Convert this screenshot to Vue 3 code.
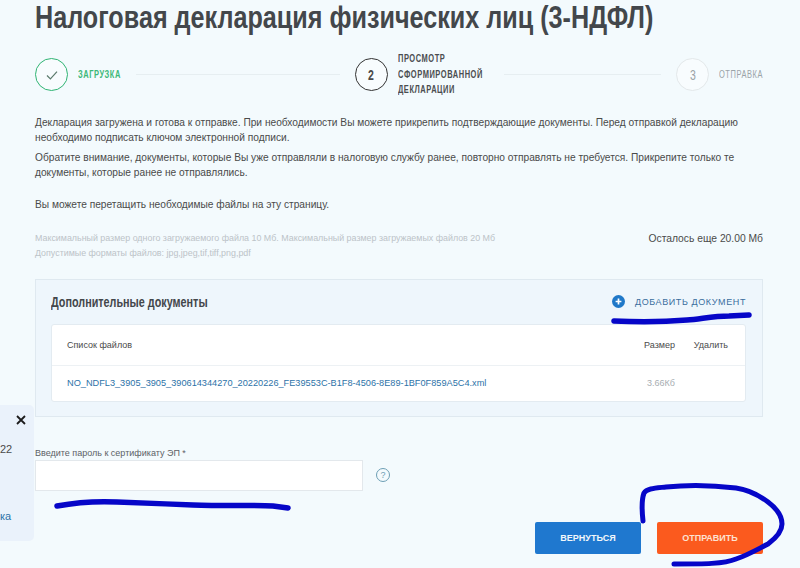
<template>
  <div class="page">
    <h1 class="title"><span class="narrow">Налоговая декларация физических лиц (3-НДФЛ)</span></h1>

    <div class="steps">
      <div class="step done">
        <span class="circle">
          <svg width="14" height="14" viewBox="0 0 14 14" fill="none"><path d="M2 7.5l3.4 3.4L12 3.6" stroke="#5b7a6c" stroke-width="1.2" /></svg>
        </span>
        <span class="step-label short"><span class="narrow">Загрузка</span></span>
      </div>
      <div class="step-line line-1"></div>
      <div class="step active">
        <span class="circle"><span class="narrow-num">2</span></span>
        <span class="step-label long"><span class="narrow">Просмотр<br />сформированной<br />декларации</span></span>
      </div>
      <div class="step-line line-2"></div>
      <div class="step todo">
        <span class="circle"><span class="narrow-num">3</span></span>
        <span class="step-label short"><span class="narrow">Отправка</span></span>
      </div>
    </div>

    <div class="intro">
      <p>Декларация загружена и готова к отправке. При необходимости Вы можете прикрепить подтверждающие документы. Перед отправкой декларацию необходимо подписать ключом электронной подписи.</p>
      <p>Обратите внимание, документы, которые Вы уже отправляли в налоговую службу ранее, повторно отправлять не требуется. Прикрепите только те документы, которые ранее не отправлялись.</p>
      <p class="drop-hint">Вы можете перетащить необходимые файлы на эту страницу.</p>
    </div>

    <div class="limits">
      <div class="limits-text">
        <div>Максимальный размер одного загружаемого файла 10 Мб. Максимальный размер загружаемых файлов 20 Мб</div>
        <div>Допустимые форматы файлов: jpg,jpeg,tif,tiff,png,pdf</div>
      </div>
      <div class="left-size">Осталось еще 20.00 Мб</div>
    </div>

    <section class="docs">
      <div class="docs-head">
        <h2><span class="narrow">Дополнительные документы</span></h2>
        <a class="add-doc">
          <svg width="13" height="13" viewBox="0 0 13 13"><circle cx="6.5" cy="6.5" r="6.5" fill="#1f78c8" /><path d="M6.5 3.6v5.8M3.6 6.5h5.8" stroke="#fff" stroke-width="1.7" /></svg>
          Добавить документ
        </a>
      </div>
      <div class="files">
        <div class="files-row files-header">
          <span class="col-name">Список файлов</span>
          <span class="col-size">Размер</span>
          <span class="col-del">Удалить</span>
        </div>
        <div class="files-row" v-for="f in files" :key="f.name">
          <a class="col-name file-link">{{ f.name }}</a>
          <span class="col-size file-size">{{ f.size }}</span>
          <span class="col-del"></span>
        </div>
      </div>
    </section>

    <label class="pass-label">Введите пароль к сертификату ЭП *</label>
    <div class="pass-row">
      <input class="pass-input" type="password" />
      <span class="help">?</span>
    </div>

    <div class="actions">
      <button class="btn btn-back">Вернуться</button>
      <button class="btn btn-send">Отправить</button>
    </div>

    <div class="toast">
      <svg class="toast-close" width="10" height="10" viewBox="0 0 10 10"><path d="M1 1l8 8M9 1l-8 8" stroke="#1c1c1c" stroke-width="1.8" /></svg>
      <span class="toast-num">22</span>
      <a class="toast-link">ка</a>
    </div>

    <!-- синие пометки поверх скриншота -->
    <svg class="marks" width="800" height="568" viewBox="0 0 800 568" fill="none" stroke="#0606c8" stroke-linecap="round" stroke-linejoin="round">
      <path d="M614 321c20 1 50 1 73-1c14-1 26-4 42-4l20-1" stroke-width="5.5" />
      <path d="M57 506c16-3 38-5 60-4c30 1 50 2 76 3c30 1 60 0 80 1l15 2" stroke-width="5.5" />
      <path d="M643 521c-1-9-2-20 1-28c3-5 12-5 22-6c18-2 46-2 70 1c14 2 24 8 32 14c8 6 14 14 14 22c0 8-6 14-14 20c-10 5-20 11-32 15c-12 5-32 5-62 5" stroke-width="5" />
    </svg>
  </div>
</template>

<script setup>
const files = [
  { name: 'NO_NDFL3_3905_3905_390614344270_20220226_FE39553C-B1F8-4506-8E89-1BF0F859A5C4.xml', size: '3.66Кб' }
]
</script>

<style>
html, body { margin: 0; background: #f3fafd; }
</style>

<style scoped>
.page {
  position: relative;
  width: 800px;
  height: 568px;
  box-sizing: border-box;
  padding: 0 37px 0 35px;
  overflow: hidden;
  background: #f3fafd;
  font-family: "Liberation Sans", Arial, sans-serif;
  color: #4a4a4a;
}
/* узкого шрифта нет, сжимаем обычный */
.narrow {
  display: inline-block;
  transform-origin: left center;
  white-space: nowrap;
}
.title {
  margin: 0;
  height: 36px;
  font-size: 31px;
  line-height: 36px;
  font-weight: 700;
  color: #43474b;
  white-space: nowrap;
}
.title .narrow { transform: scaleX(0.812); }
.steps {
  display: flex;
  align-items: center;
  height: 33px;
  margin-top: 22px;
}
.step { display: flex; align-items: center; gap: 10px; flex: none; }
.circle {
  width: 31px;
  height: 31px;
  border: 1px solid #333;
  border-radius: 50%;
  display: flex;
  align-items: center;
  justify-content: center;
  font-size: 14px;
  font-weight: 700;
  background: #f8fcfe;
}
.narrow-num { display: inline-block; transform: scaleX(0.75); }
.step-label {
  font-size: 11px;
  font-weight: 700;
  line-height: 15.5px;
  letter-spacing: 0.8px;
  text-transform: uppercase;
  color: #4a4d50;
}
.step-label.short { width: 44px; }
.step-label.long { width: 84px; }
.step-label .narrow { transform: scaleX(0.68); }
.step.done .circle { border-color: #2fb473; }
.step.done .step-label { color: #3cb878; }
.step.todo .circle { border-color: #e3e8ea; color: #9aa2a6; font-weight: 400; }
.step.todo .step-label { color: #9aa3a8; font-weight: 400; }
.step-line { height: 1px; background: #e6eef1; }
.line-1 { width: 205px; margin: 0 15px 0 14px; }
.line-2 { width: 158px; margin: 0 15px 0 22px; }
.intro {
  margin-top: 25px;
  font-size: 10.2px;
  line-height: 14.5px;
  color: #4a4a4a;
}
.intro p { margin: 0 0 6px; }
.intro .drop-hint { margin-top: 18px; }
.limits {
  display: flex;
  justify-content: space-between;
  margin-top: 18px;
}
.limits-text {
  font-size: 8.9px;
  line-height: 15px;
  color: #bcc3c8;
}
.left-size { font-size: 10.3px; line-height: 15px; color: #4a4a4a; }
.docs {
  margin-top: 18px;
  height: 138px;
  box-sizing: border-box;
  padding: 0 16px 0 15px;
  border: 1px solid #dfe9f0;
  background: #eef6fc;
}
.docs-head {
  display: flex;
  justify-content: space-between;
  align-items: center;
  height: 44px;
}
.docs-head h2 {
  margin: 0;
  font-size: 15px;
  font-weight: 700;
  color: #43474b;
}
.docs-head h2 .narrow { transform: scaleX(0.72); }
.add-doc {
  display: flex;
  align-items: center;
  gap: 10px;
  font-size: 9px;
  letter-spacing: 0.6px;
  text-transform: uppercase;
  color: #3a6e9e;
}
.files {
  background: #fff;
  border: 1px solid #e3ebf1;
  border-radius: 3px;
}
.files-row {
  display: flex;
  align-items: center;
  height: 35px;
  padding: 0 17px 0 15px;
  font-size: 9px;
}
.files-header {
  height: 40px;
  border-bottom: 1px solid #edf1f4;
  color: #4a4a4a;
}
.col-name { flex: 1; }
.col-size { width: 33px; text-align: right; }
.col-del { width: 53px; text-align: right; }
.file-link { color: #2c72a8; font-size: 9.2px; }
.file-size { color: #a8aeb2; }
.pass-label {
  display: block;
  margin-top: 30px;
  font-size: 9px;
  line-height: 13px;
  color: #5c6166;
}
.pass-row {
  display: flex;
  align-items: center;
  gap: 13px;
}
.pass-input {
  width: 328px;
  height: 31px;
  box-sizing: border-box;
  border: 1px solid #e3e8ec;
  background: #fff;
  outline: none;
}
.help {
  width: 12px;
  height: 12px;
  border: 1px solid #6d9fb5;
  border-radius: 50%;
  display: flex;
  align-items: center;
  justify-content: center;
  font-size: 9px;
  color: #6d9fb5;
}
.actions {
  display: flex;
  justify-content: flex-end;
  gap: 16px;
  margin-top: 31px;
}
.btn {
  height: 32px;
  width: 106px;
  border: none;
  border-radius: 2px;
  color: #f2f7fb;
  font-family: inherit;
  font-size: 9px;
  font-weight: 700;
  text-transform: uppercase;
}
.btn-back { background: #1f78cf; }
.btn-send { background: #fb5a1e; color: #fde2d2; }
.toast {
  position: absolute;
  left: 0;
  top: 405px;
  width: 34px;
  height: 136px;
  background: #eaf2fb;
  border-radius: 0 5px 5px 0;
  font-size: 11px;
}
.toast-close { position: absolute; left: 16px; top: 10px; }
.toast-num { position: absolute; left: 0; top: 38px; color: #4a4a4a; }
.toast-link { position: absolute; left: 0; top: 105px; color: #2c72a8; }
.marks { position: absolute; left: 0; top: 0; pointer-events: none; }
</style>
